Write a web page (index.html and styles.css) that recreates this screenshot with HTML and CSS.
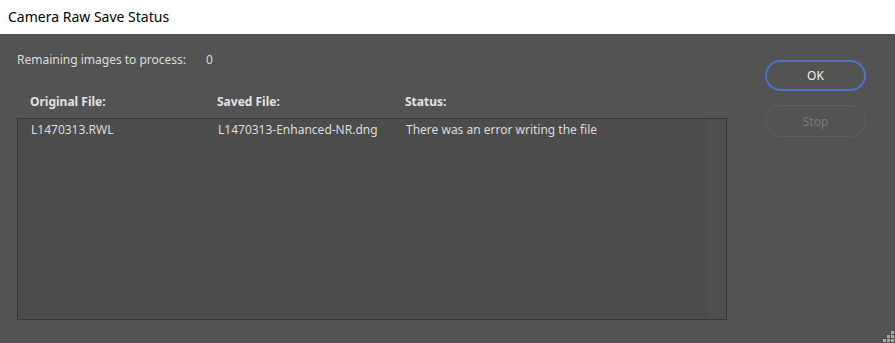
FILE: index.html
```html
<!DOCTYPE html>
<html lang="en">
<head>
    <meta charset="UTF-8">
    <title>Camera Raw Save Status</title>
    <link rel="stylesheet" href="styles.css">
</head>
<body>

    <div class="titlebar">Camera Raw Save Status</div>

    <div class="dialog">
        <div class="main">
            <div class="remaining">
                <span class="remaining-label">Remaining images to process:</span>
                <span>0</span>
            </div>

            <div class="cols heads">
                <div>Original File:</div>
                <div>Saved File:</div>
                <div>Status:</div>
            </div>

            <div class="list">
                <div class="rows">
                    <div class="cols item">
                        <div>L1470313.RWL</div>
                        <div>L1470313-Enhanced-NR.dng</div>
                        <div>There was an error writing the file</div>
                    </div>
                </div>
                <div class="track"></div>
            </div>
        </div>

        <div class="buttons">
            <button class="btn ok">OK</button>
            <button class="btn stop" disabled>Stop</button>
        </div>
    </div>

    <!-- resize grip -->
    <svg class="grip" width="12" height="12" viewBox="0 0 12 12">
        <rect x="8" y="0" width="3" height="3" fill="#a8a8a8"/>
        <rect x="4" y="4" width="3" height="3" fill="#a8a8a8"/>
        <rect x="8" y="4" width="3" height="3" fill="#a8a8a8"/>
        <rect x="0" y="8" width="3" height="3" fill="#a8a8a8"/>
        <rect x="4" y="8" width="3" height="3" fill="#a8a8a8"/>
        <rect x="8" y="8" width="3" height="3" fill="#a8a8a8"/>
    </svg>

</body>
</html>
```

FILE: styles.css
```css
html, body {
    margin: 0;
    height: 100%;
}

body {
    background-color: #535353;
    font-family: "Noto Sans", "DejaVu Sans", sans-serif;
    color: #dcdcdc;
    font-size: 12px;
    position: relative;
    overflow: hidden;
}

.titlebar {
    background-color: #ffffff;
    color: #000000;
    height: 34px;
    line-height: 33px;
    padding-left: 8px;
    font-size: 14px;
}

.dialog {
    display: flex;
}

.main {
    padding-left: 17px;
    width: 710px;
}

.remaining {
    margin-top: 18px;
    line-height: 16px;
    display: flex;
}

.remaining-label {
    width: 189px;
}

.cols {
    display: grid;
    grid-template-columns: 187px 188px 1fr;
    padding-left: 13px;
}

.heads {
    margin-top: 26px;
    line-height: 16px;
    font-weight: bold;
    color: #e2e2e2;
}

.list {
    margin-top: 8px;
    height: 200px;
    border: 1px solid #383838;
    background-color: #4c4c4c;
    display: flex;
}

.rows {
    flex: 1;
    padding-top: 3px;
}

.item {
    line-height: 16px;
}

.track {
    width: 19px;
    background-color: #4f4f4f;
}

.buttons {
    margin-left: 38px;
    margin-top: 26px;
    display: flex;
    flex-direction: column;
    gap: 14px;
}

.btn {
    width: 101px;
    height: 31px;
    border-radius: 16px;
    background-color: transparent;
    font-family: "Noto Sans", "DejaVu Sans", sans-serif;
    font-size: 12px;
}

.ok {
    border: 2px solid #4a76c4;
    color: #f2f2f2;
}

.stop {
    border: 1px solid #5e5e5e;
    color: #7a7a7a;
    height: 32px;
}

.grip {
    position: absolute;
    right: 0;
    bottom: 0;
}
```
